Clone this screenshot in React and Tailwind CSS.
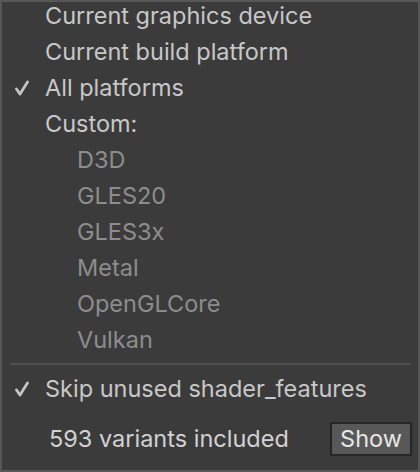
import React from 'react';

const Check = () => (
  <svg width="14" height="16" viewBox="0 0 14 16" className="text-[#c4c4c4]">
    <path d="M1.5 9 L5 14 L12.5 2" fill="none" stroke="currentColor" strokeWidth="2.8" strokeLinecap="round" strokeLinejoin="round" />
  </svg>
);

const Item = ({ label, checked, sub }) => (
  <div className="flex items-center h-[36px]">
    <div className="w-[43px] flex justify-center pr-[4px]">{checked && <Check />}</div>
    <span className={sub ? 'pl-[32px] text-[#8d8d8d]' : 'text-[#c8c8c8]'}>{label}</span>
  </div>
);

export default function App() {
  const platforms = ['D3D', 'GLES20', 'GLES3x', 'Metal', 'OpenGLCore', 'Vulkan'];
  return (
    <div className="w-[420px] h-[472px] bg-[#3b3b3b] border-2 border-[#575757] overflow-hidden text-[23.5px] leading-none" style={{ fontFamily: 'Inter, sans-serif' }}>
      <div className="-mt-[4px]">
        <Item label="Current graphics device" />
        <Item label="Current build platform" />
        <Item label="All platforms" checked />
        <Item label="Custom:" />
        {platforms.map((p) => (
          <Item key={p} label={p} sub />
        ))}
      </div>
      <div className="mx-[8px] mt-[5px] h-[2px] bg-[#4f4f4f]" />
      <div className="mt-[6px]">
        <Item label="Skip unused shader_features" checked />
      </div>
      <div className="flex items-center justify-between pl-[47px] pr-[6px] mt-[15px]">
        <span className="text-[#d2d2d2]">593 variants included</span>
        <button className="w-[82px] h-[34px] bg-[#585858] border-2 border-[#262626] text-[#e6e6e6]">Show</button>
      </div>
    </div>
  );
}
